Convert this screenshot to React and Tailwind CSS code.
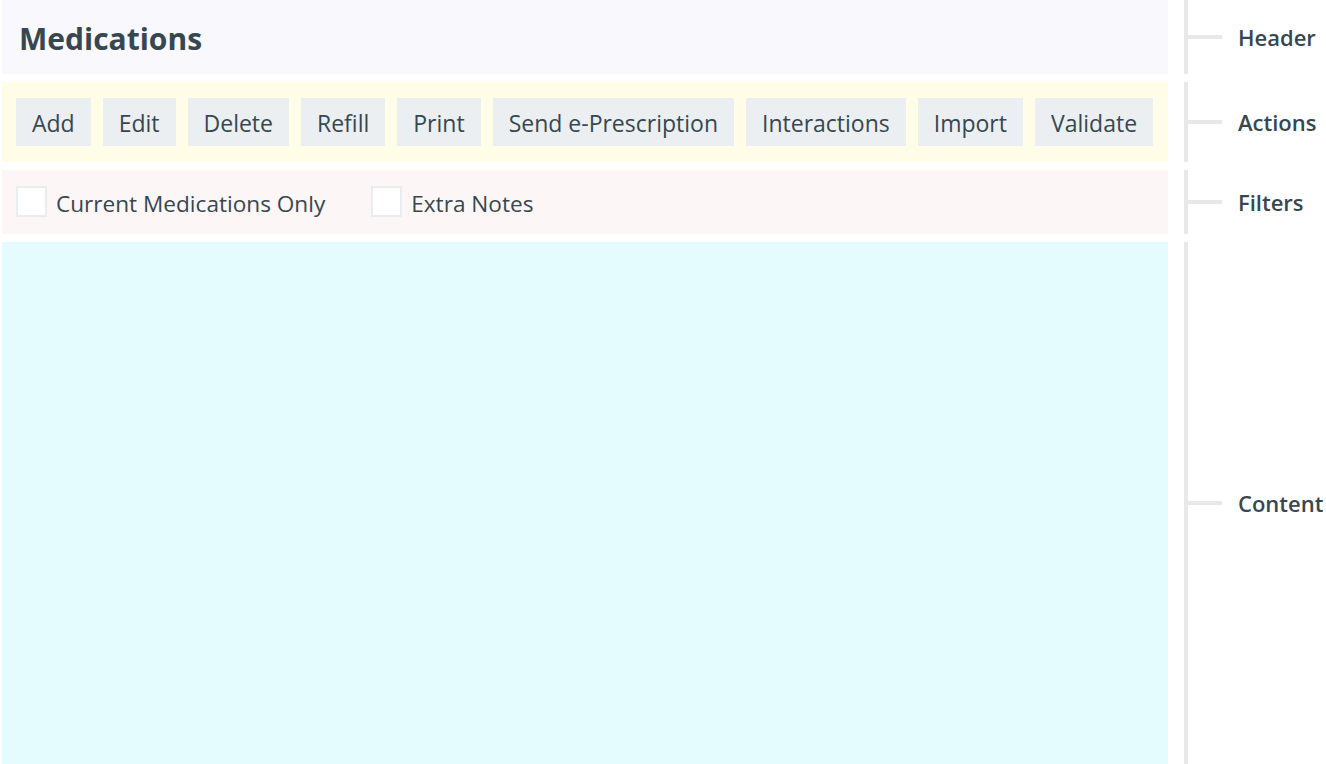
import React from 'react';

const actions = ['Add', 'Edit', 'Delete', 'Refill', 'Print', 'Send e-Prescription', 'Interactions', 'Import', 'Validate'];

function Note({ label }) {
  // annotation on the right: vertical rail, tick, label
  return (
    <div className="ml-[16px] flex items-center border-l-4 border-[#e8e8e8]">
      <div className="h-[4px] w-[34px] bg-[#e8e8e8]" />
      <span className="ml-[16px] text-[22px] font-semibold text-[#37474f]">{label}</span>
    </div>
  );
}

function Check({ label }) {
  return (
    <label className="flex items-center gap-[9px]">
      <span className="h-[31px] w-[31px] border-2 border-[#e9edf0] bg-white" />
      <span className="pt-[3px]">{label}</span>
    </label>
  );
}

export default function App() {
  return (
    <div className="flex h-[764px] w-[1326px] flex-col gap-2 overflow-hidden bg-white text-[#37474f]" style={{ fontFamily: '"Open Sans", sans-serif' }}>
      <div className="flex h-[74px] shrink-0">
        <div className="ml-[2px] flex w-[1166px] items-center bg-[#f8f8fd] px-[17px]">
          <h1 className="pt-[2px] text-[30px] font-bold">Medications</h1>
        </div>
        <Note label="Header" />
      </div>

      <div className="flex h-[80px] shrink-0">
        <div className="ml-[2px] flex w-[1166px] items-center gap-3 bg-[#fffde8] px-[14px]">
          {actions.map(a => (
            <button key={a} className="h-[48px] bg-[#eceff1] px-4 pt-[3px] text-[23px]">{a}</button>
          ))}
        </div>
        <Note label="Actions" />
      </div>

      <div className="flex h-[64px] shrink-0">
        <div className="ml-[2px] flex w-[1166px] items-center gap-[46px] bg-[#fdf6f6] px-[14px] text-[22.6px]">
          <Check label="Current Medications Only" />
          <Check label="Extra Notes" />
        </div>
        <Note label="Filters" />
      </div>

      <div className="flex flex-1">
        <div className="ml-[2px] w-[1166px] bg-[#e4fcfe]" />
        <Note label="Content" />
      </div>
    </div>
  );
}
